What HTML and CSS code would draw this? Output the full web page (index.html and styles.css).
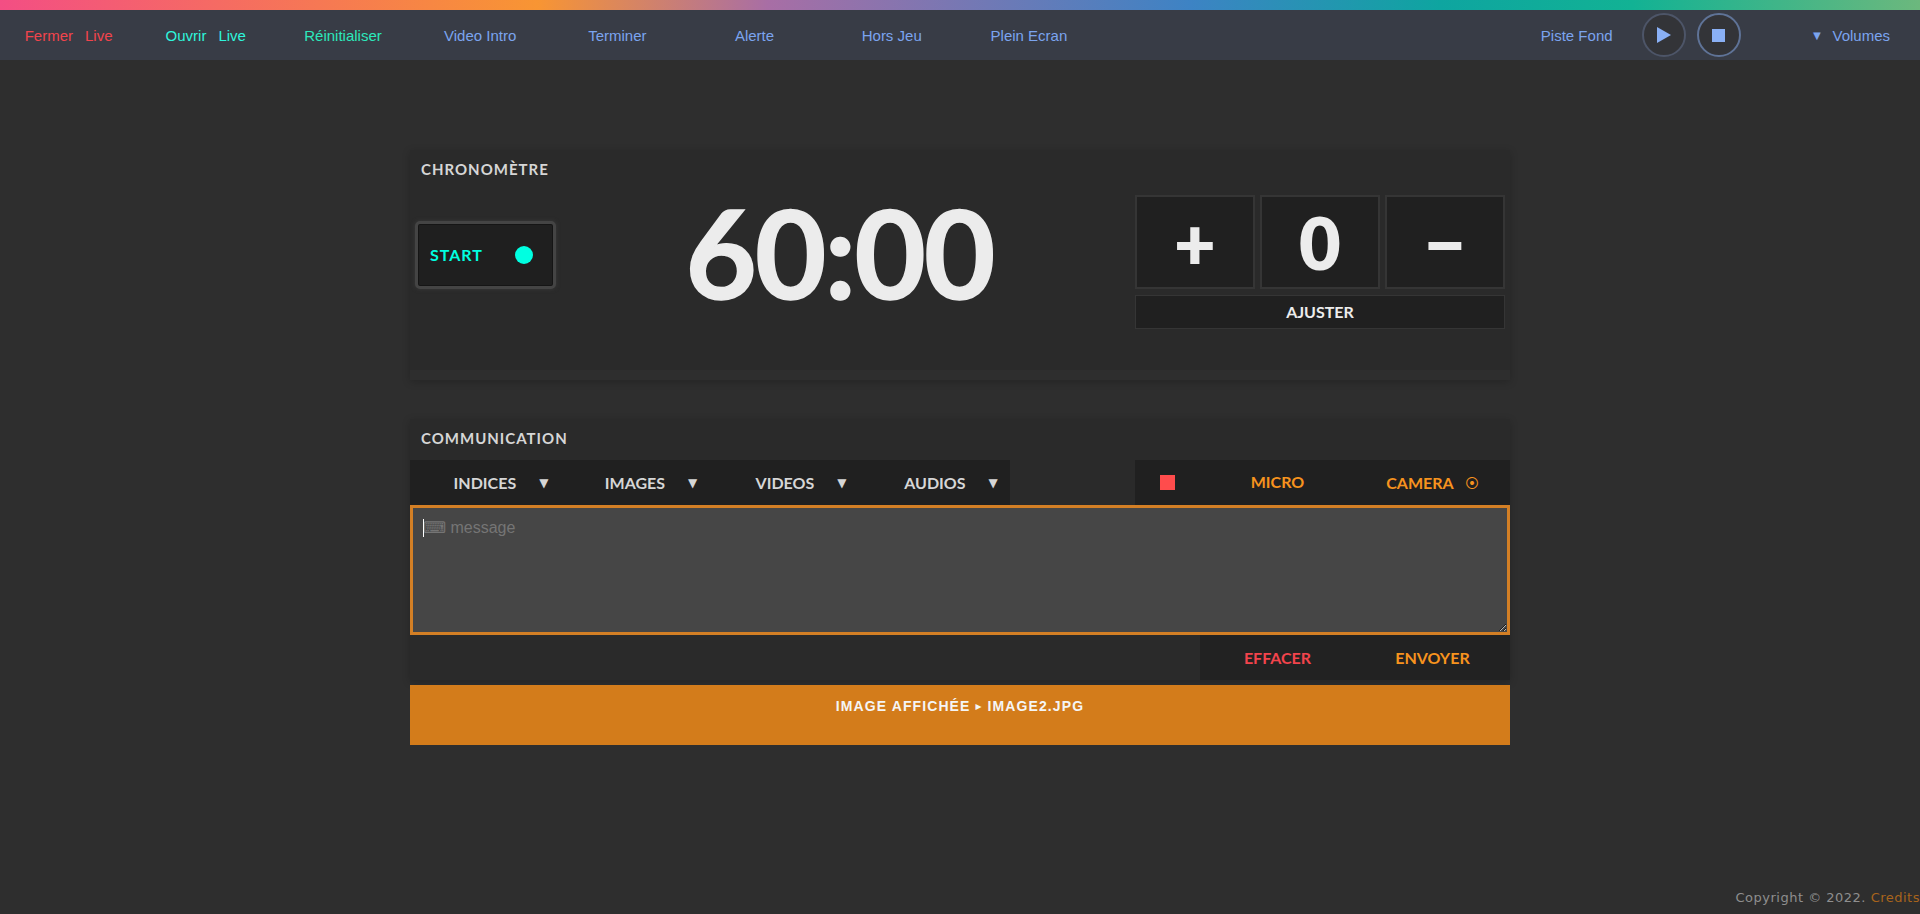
FILE: index.html
```html
<!DOCTYPE html>
<html lang="fr">

<head>
    <meta charset="utf-8">
    <title>Régie</title>
    <link rel="stylesheet" href="styles.css">
</head>

<body>
    <div class="rainbow"></div>
    <nav class="topnav">
        <a class="nav-item red"><span>Fermer</span><span>Live</span></a>
        <a class="nav-item cyan"><span>Ouvrir</span><span>Live</span></a>
        <a class="nav-item green">Réinitialiser</a>
        <a class="nav-item">Video Intro</a>
        <a class="nav-item">Terminer</a>
        <a class="nav-item">Alerte</a>
        <a class="nav-item">Hors Jeu</a>
        <a class="nav-item">Plein Ecran</a>
        <div class="nav-right">
            <a class="nav-track">Piste Fond</a>
            <button class="round-btn">
                <svg width="14" height="16" viewBox="0 0 14 16"><path d="M0 0L14 8L0 16Z" fill="#8ab0f5"/></svg>
            </button>
            <button class="round-btn lit">
                <svg width="13" height="13" viewBox="0 0 13 13"><rect width="13" height="13" fill="#8ab0f5"/></svg>
            </button>
            <a class="nav-volumes"><span class="small-arrow">▼</span>Volumes</a>
        </div>
    </nav>

    <main class="content">
        <section class="panel timer-panel">
            <h2 class="panel-title">CHRONOMÈTRE</h2>
            <div class="timer-row">
                <button class="start-btn"><span class="start-label">START</span><i class="start-dot"></i></button>
                <div class="clock">60:00</div>
                <div class="adjust">
                    <div class="adjust-cell">+</div>
                    <div class="adjust-cell">0</div>
                    <div class="adjust-cell">−</div>
                    <div class="adjust-label">AJUSTER</div>
                </div>
            </div>
        </section>

        <section class="panel comm-panel">
            <h2 class="panel-title">COMMUNICATION</h2>
            <div class="comm-bar">
                <div class="tabs">
                    <a class="tab">INDICES<span class="tab-arrow">▼</span></a>
                    <a class="tab">IMAGES<span class="tab-arrow">▼</span></a>
                    <a class="tab">VIDEOS<span class="tab-arrow">▼</span></a>
                    <a class="tab">AUDIOS<span class="tab-arrow">▼</span></a>
                </div>
                <div class="media">
                    <div class="media-cell"><i class="rec"></i></div>
                    <div class="media-cell micro">MICRO</div>
                    <div class="media-cell">CAMERA<span class="target">⦿</span></div>
                </div>
            </div>
            <div class="message-wrap">
                <textarea class="message" placeholder="⌨ message"></textarea>
                <i class="caret"></i>
            </div>
            <div class="actions">
                <div class="action-group">
                    <a class="action clear">EFFACER</a>
                    <a class="action">ENVOYER</a>
                </div>
            </div>
        </section>

        <div class="shown-image">IMAGE AFFICHÉE <span class="mini-arrow">▸</span> IMAGE2.JPG</div>
    </main>

    <footer class="copyright">Copyright © 2022. <a>Credits</a></footer>
</body>

</html>
```
FILE: styles.css
```css
body {
    margin: 0;
    display: flex;
    flex-direction: column;
    min-height: 100vh;
    background-color: #2e2e2e;
    font-family: Lato, Arial, sans-serif;
    color: #ececec;
}

button {
    font-family: inherit;
    padding: 0;
}

.rainbow {
    height: 10px;
    background: linear-gradient(to right, #f34e84 0%, #f89533 28%, #a86ea5 40%, #3d83c4 62%, #0ea5a0 75%, #12b294 85%, #6cb87d 100%);
}

.topnav {
    display: flex;
    align-items: center;
    height: 50px;
    background-color: #383c46;
    font-family: "Liberation Sans", Arial, sans-serif;
    font-size: 15px;
    color: #7ba4ef;
}

.nav-item {
    display: flex;
    justify-content: center;
    gap: 12px;
    width: 137.2px;
}

.red {
    color: #f2444c;
}

.cyan {
    color: #2ef5dc;
}

.green {
    color: #2ce8bb;
}

.nav-right {
    display: flex;
    align-items: center;
    margin-left: auto;
    padding-right: 30px;
}

.nav-track {
    margin-right: 29px;
}

.round-btn {
    display: flex;
    align-items: center;
    justify-content: center;
    width: 44px;
    height: 44px;
    margin-right: 11px;
    border: 2px solid #4d5568;
    border-radius: 50%;
    background-color: #333438;
}

.round-btn.lit {
    border-color: #5f7397;
    margin-right: 0;
}

.nav-volumes {
    display: flex;
    align-items: center;
    margin-left: 70px;
}

.small-arrow {
    font-size: 13px;
    margin-right: 9px;
}

.content {
    width: 1100px;
    margin: 90px auto 0;
}

.panel {
    background-color: #2a2a2a;
    box-shadow: 0 2px 8px rgba(0, 0, 0, 0.2);
}

.panel-title {
    margin: 0;
    padding: 0 11px 3px;
    font-size: 15px;
    font-weight: 700;
    line-height: 38px;
    letter-spacing: 1px;
    color: #d6d6d6;
}

.timer-panel {
    height: 230px;
    border-bottom: 10px solid #2e2e2e;
    box-sizing: border-box;
}

.timer-row {
    display: flex;
    align-items: flex-start;
    padding: 4px 5px 0 5px;
}

.start-btn {
    display: flex;
    align-items: center;
    justify-content: space-between;
    box-sizing: border-box;
    width: 141px;
    height: 68px;
    margin-top: 26px;
    padding: 0 20px 0 12px;
    border: 3px solid #444;
    border-radius: 5px;
    background-color: #1f1f1f;
    box-shadow: inset 0 0 0 1px #151515, 0 0 4px #3a3a3a;
    font-size: 16px;
    font-weight: 700;
    letter-spacing: 1px;
    color: #00ffe1;
}

.start-label {
    margin-bottom: 2px;
}

.start-dot {
    width: 18px;
    height: 18px;
    border-radius: 50%;
    background-color: #00ffe1;
}

.clock {
    flex: 1;
    margin-top: -18px;
    padding-right: 12px;
    font-size: 123px;
    line-height: 150px;
    font-weight: 700;
    letter-spacing: -1.8px;
    text-align: center;
    color: #ececec;
    -webkit-text-stroke: 1.5px #ececec;
}

.adjust {
    display: grid;
    grid-template-columns: repeat(3, 120px);
    grid-template-rows: 94px 34px;
    column-gap: 5px;
    row-gap: 6px;
}

.adjust-cell,
.adjust-label {
    display: flex;
    align-items: center;
    justify-content: center;
    border: 2px solid #353535;
    background-color: #202020;
    font-weight: 700;
}

.adjust-cell {
    font-size: 72px;
    font-weight: 800;
}

.adjust-label {
    grid-column: 1 / 4;
    border-width: 1px;
    padding-bottom: 2px;
    font-size: 16px;
    font-weight: 700;
}

.comm-panel {
    margin-top: 39px;
}

.comm-bar {
    display: flex;
    justify-content: space-between;
    height: 45px;
}

.tabs {
    display: flex;
    width: 600px;
    background-color: #202020;
}

.tab {
    display: flex;
    align-items: center;
    justify-content: center;
    box-sizing: border-box;
    width: 150px;
    padding-left: 32px;
    font-size: 16px;
    font-weight: 700;
    color: #d6d6d6;
}

.tab-arrow {
    margin-left: 23px;
    font-family: "DejaVu Sans", sans-serif;
    font-size: 12px;
}

.media {
    display: grid;
    grid-template-columns: 65px 155px 155px;
    background-color: #202020;
    color: #f7931e;
    font-size: 16px;
    font-weight: 700;
}

.media-cell {
    display: flex;
    align-items: center;
    justify-content: center;
}

.micro {
    padding-bottom: 2px;
}

.rec {
    width: 15px;
    height: 15px;
    background-color: #ff4c4c;
}

.target {
    margin-left: 11px;
    font-family: "DejaVu Sans", sans-serif;
    font-size: 14px;
    font-weight: 400;
}

.message-wrap {
    position: relative;
}

.message {
    display: block;
    box-sizing: border-box;
    width: 1100px;
    height: 130px;
    padding: 10px;
    border: 3px solid #d37f25;
    outline: none;
    background-color: #464646;
    font-family: "Liberation Sans", Arial, sans-serif;
    font-size: 16px;
    color: #fff;
}

.message::placeholder {
    color: #757575;
}

.caret {
    position: absolute;
    left: 13px;
    top: 14px;
    width: 1px;
    height: 18px;
    background-color: #fff;
}

.actions {
    display: flex;
    justify-content: flex-end;
    height: 45px;
    margin-bottom: 5px;
}

.action-group {
    display: grid;
    grid-template-columns: 155px 155px;
    background-color: #222;
}

.action {
    display: flex;
    align-items: center;
    justify-content: center;
    font-size: 16px;
    font-weight: 700;
    color: #f7931e;
}

.action.clear {
    color: #f2444c;
}

.shown-image {
    height: 60px;
    padding-top: 13px;
    box-sizing: border-box;
    background-color: #d37c1b;
    font-family: "Liberation Sans", Arial, sans-serif;
    font-size: 14px;
    font-weight: 700;
    letter-spacing: 1.1px;
    text-align: center;
    color: #f5f5f5;
}

.mini-arrow {
    font-family: "DejaVu Sans", sans-serif;
    font-size: 12px;
    vertical-align: 1px;
}

.copyright {
    margin-top: auto;
    padding-bottom: 9px;
    font-family: "DejaVu Sans", sans-serif;
    font-size: 13px;
    letter-spacing: 0.5px;
    white-space: nowrap;
    text-align: right;
    color: #8f8f8f;
}

.copyright a {
    color: #a8641c;
}
```
